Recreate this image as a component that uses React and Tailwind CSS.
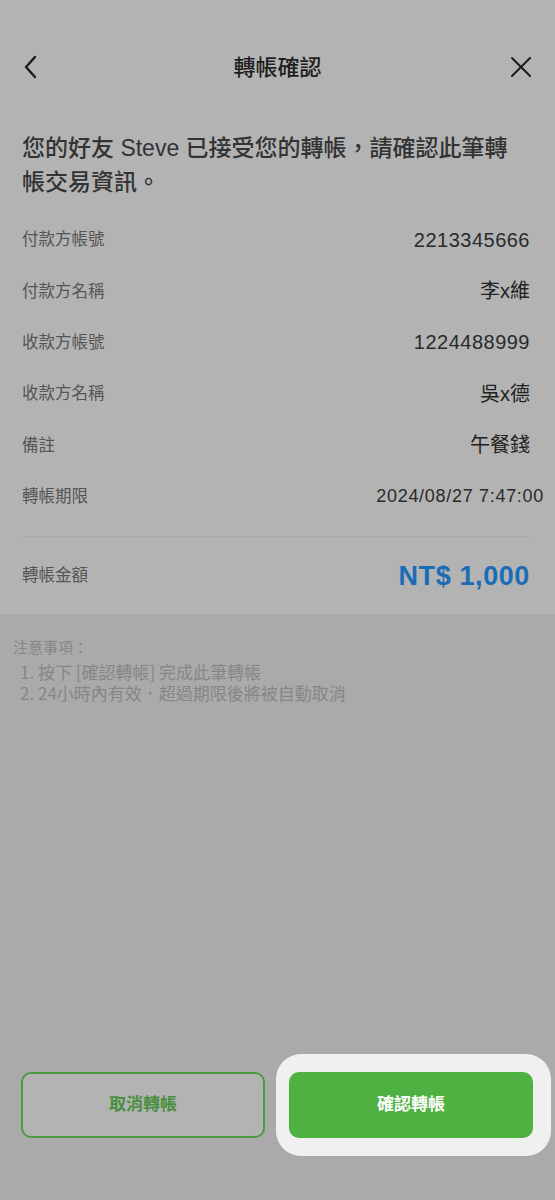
import React from "react";

const font = { fontFamily: '"Liberation Sans", "Noto Sans CJK TC", sans-serif' };
const cjkFont = { fontFamily: '"Noto Sans CJK TC", "Noto Sans", sans-serif' };

const rows = [
  { label: "付款方帳號", value: "2213345666", num: true },
  { label: "付款方名稱", value: "李x維" },
  { label: "收款方帳號", value: "1224488999", num: true },
  { label: "收款方名稱", value: "吳x德" },
  { label: "備註", value: "午餐錢" },
  { label: "轉帳期限", value: "2024/08/27 7:47:00", small: true },
];

const Row = ({ label, value, small, num }) => (
  <div className="h-[51.4px] flex items-center justify-between">
    <span className="text-[16.5px] text-[#555555]">{label}</span>
    {small ? (
      <span className="text-[18px] tracking-[0.7px] text-[#2a2a2a] -mr-[14px]">{value}</span>
    ) : num ? (
      <span className="text-[20px] tracking-[0.5px] text-[#2a2a2a]">{value}</span>
    ) : (
      <span className="text-[20px] text-[#222222]">{value}</span>
    )}
  </div>
);

export default function App() {
  return (
    <div className="w-[555px] h-[1200px] bg-[#aaaaaa] flex flex-col overflow-hidden" style={font}>
      {/* 卡片區 */}
      <div className="bg-[#b3b3b3] pt-[39px] pl-[22px] pr-[25px]">
        <div className="h-14 flex items-center justify-between">
          <svg width="18" height="26" viewBox="0 0 18 26" fill="none" stroke="#1c1c1c"
            strokeWidth="2.4" strokeLinecap="round" strokeLinejoin="round">
            <path d="M13 3L4 13l9 10" />
          </svg>
          <span className="text-[22px] font-medium text-[#1f1f1f] ml-[6px]">轉帳確認</span>
          <svg width="24" height="24" viewBox="0 0 24 24" fill="none" stroke="#1c1c1c"
            strokeWidth="2" strokeLinecap="round" className="-mr-[3px]">
            <path d="M3 3l18 18M21 3L3 21" />
          </svg>
        </div>

        <p className="mt-[36px] text-[23px] leading-[34px] font-medium text-[#333333]">
          您的好友 Steve 已接受您的轉帳，請確認此筆轉<br />帳交易資訊。
        </p>

        <div className="mt-[15px] flex flex-col">
          {rows.map((r) => (
            <Row key={r.label} {...r} />
          ))}
        </div>

        <div className="mt-[14px] border-t border-[#a9a9a9]" />

        <div className="h-[77px] flex items-center justify-between">
          <span className="text-[16.5px] text-[#555555]">轉帳金額</span>
          <span className="text-[27px] font-bold tracking-[0.6px] text-[#1b6cb6]">NT$ 1,000</span>
        </div>
      </div>

      {/* 注意事項 */}
      <div className="pt-[22px] pl-[13px] leading-[21px] font-normal text-[#868686]" style={cjkFont}>
        <p className="mb-[4px] text-[15px]">注意事項：</p>
        <p className="pl-[7px] text-[17px]">1. 按下 [確認轉帳] 完成此筆轉帳</p>
        <p className="pl-[7px] text-[17px]">2. 24小時內有效．超過期限後將被自動取消</p>
      </div>

      <div className="flex-1" />

      {/* 按鈕 */}
      <div className="flex items-center pl-[21px] pr-[4px] mb-[44px]">
        <button className="w-[244px] h-[66px] rounded-[10px] border-2 border-[#4c9a42] bg-[#b3b3b3] text-[17px] font-bold text-[#4a8f3f]">
          取消轉帳
        </button>
        <div className="ml-[11px] p-[18px] pl-[13px] bg-[#f0f0f0] rounded-[25px]">
          <button className="w-[244px] h-[66px] rounded-[10px] bg-[#4fb142] text-[17px] font-bold text-white">
            確認轉帳
          </button>
        </div>
      </div>
    </div>
  );
}
